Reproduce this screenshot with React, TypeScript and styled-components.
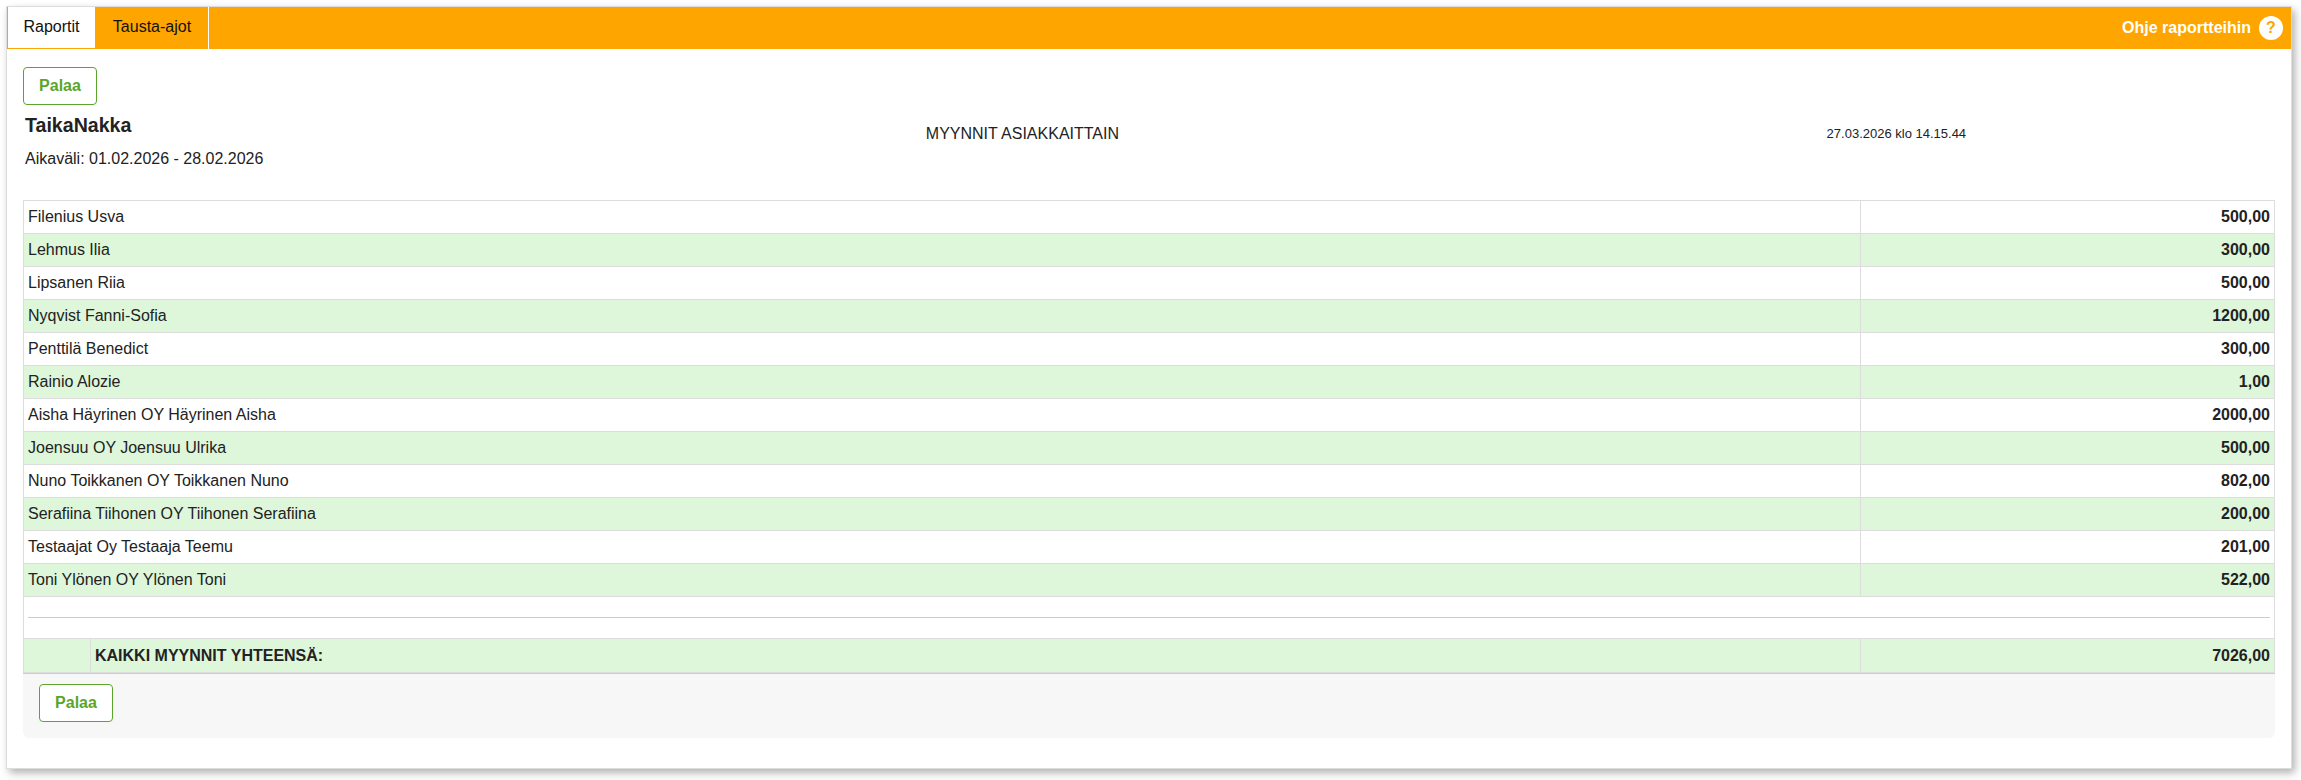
import React from "react";
import styled, { createGlobalStyle } from "styled-components";

const GlobalStyle = createGlobalStyle`
  html, body {
    margin: 0;
    padding: 0;
    background: #fff;
    font-family: "Liberation Sans", Arial, sans-serif;
    font-size: 16px;
    color: #222;
  }
`;

const Page = styled.div`
  padding: 6px 9px 11px 6px;
`;

const Panel = styled.div`
  border: 1px solid #ddd;
  background: #fff;
  box-shadow: 3px 4px 8px rgba(0, 0, 0, 0.3);
  height: 763px;
  box-sizing: border-box;
`;

const TabBar = styled.div`
  display: flex;
  align-items: stretch;
  height: 42px;
  background: #ffa500;
  box-sizing: border-box;
`;

const Tab = styled.div<{ $active?: boolean }>`
  display: flex;
  align-items: center;
  justify-content: center;
  box-sizing: border-box;
  color: #111;
  font-size: 16px;
  ${(p) =>
    p.$active
      ? `width: 89px; background: #fff; border: 1px solid #ffa500; border-top: 0; padding-bottom: 1px;`
      : `width: 113px; border-right: 1px solid #fff; padding-bottom: 2px;`}
`;

const HelpLink = styled.div`
  margin-left: auto;
  display: flex;
  align-items: center;
  gap: 8px;
  padding-right: 8px;
  color: #fff;
  font-weight: bold;
  font-size: 16px;
`;

const HelpIcon = styled.span`
  width: 24px;
  height: 24px;
  border-radius: 50%;
  background: #fff;
  color: #ffa500;
  font-weight: bold;
  font-size: 16px;
  display: flex;
  align-items: center;
  justify-content: center;
`;

const Content = styled.div`
  padding: 18px 16px 0;
`;

const BackButton = styled.button`
  display: block;
  width: 74px;
  height: 38px;
  box-sizing: border-box;
  background: #fff;
  border: 1px solid #5aa62b;
  border-radius: 4px;
  color: #5aa62b;
  font-family: inherit;
  font-size: 16px;
  font-weight: bold;
  padding: 0;
`;

const ReportHead = styled.div`
  display: grid;
  grid-template-columns: 40% 40% 20%;
  align-items: start;
  height: 95px;
`;

const ReportInfo = styled.div`
  padding: 8px 0 0 2px;
`;

const Company = styled.div`
  font-size: 19.6px;
  font-weight: bold;
  line-height: 24px;
  margin-bottom: 13px;
`;

const Period = styled.div`
  font-size: 16px;
  line-height: 18px;
`;

const ReportTitle = styled.div`
  padding: 20px 0 0 2px;
  font-size: 16px;
  line-height: 18px;
  color: #222;
`;

const Stamp = styled.div`
  padding: 20px 0 0 2px;
  font-size: 13px;
  line-height: 18px;
  color: #222;
`;

const Table = styled.table`
  width: 100%;
  border-collapse: collapse;
  table-layout: fixed;
  border: 1px solid #ddd;
`;

const Row = styled.tr<{ $striped?: boolean }>`
  height: 33px;
  background: ${(p) => (p.$striped ? "#def6da" : "#fff")};
`;

const NameCell = styled.td`
  border: 1px solid #ddd;
  padding: 0 4px;
  font-size: 16px;
`;

const AmountCell = styled.td`
  border: 1px solid #ddd;
  padding: 0 4px 0 0;
  text-align: right;
  font-weight: bold;
  font-size: 16px;
`;

const SpacerCell = styled.td`
  height: 41px;
  padding: 0 4px;
  border: 1px solid #ddd;
`;

const Rule = styled.div`
  height: 1px;
  background: #ccc;
`;

const TotalInner = styled.div`
  display: flex;
  height: 33px;
  align-items: stretch;
`;

const TotalIndent = styled.div`
  width: 66px;
  border-right: 1px solid #ddd;
`;

const TotalLabel = styled.div`
  display: flex;
  align-items: center;
  padding-left: 4px;
  font-weight: bold;
`;

const TotalNameCell = styled.td`
  border: 1px solid #ddd;
  padding: 0;
  font-size: 16px;
`;

const Footer = styled.div`
  background: #f7f7f7;
  border-top: 1px solid #ccc;
  border-radius: 0 0 6px 6px;
  height: 65px;
  box-sizing: border-box;
  padding: 10px 16px;
`;

const rows: [string, string][] = [
  ["Filenius Usva", "500,00"],
  ["Lehmus Ilia", "300,00"],
  ["Lipsanen Riia", "500,00"],
  ["Nyqvist Fanni-Sofia", "1200,00"],
  ["Penttilä Benedict", "300,00"],
  ["Rainio Alozie", "1,00"],
  ["Aisha Häyrinen OY Häyrinen Aisha", "2000,00"],
  ["Joensuu OY Joensuu Ulrika", "500,00"],
  ["Nuno Toikkanen OY Toikkanen Nuno", "802,00"],
  ["Serafiina Tiihonen OY Tiihonen Serafiina", "200,00"],
  ["Testaajat Oy Testaaja Teemu", "201,00"],
  ["Toni Ylönen OY Ylönen Toni", "522,00"],
];

export default function App() {
  return (
    <Page>
      <GlobalStyle />
      <Panel>
        <TabBar>
          <Tab $active>Raportit</Tab>
          <Tab>Tausta-ajot</Tab>
          <HelpLink>
            Ohje raportteihin
            <HelpIcon>?</HelpIcon>
          </HelpLink>
        </TabBar>
        <Content>
          <BackButton>Palaa</BackButton>
          <ReportHead>
            <ReportInfo>
              <Company>TaikaNakka</Company>
              <Period>Aikaväli: 01.02.2026 - 28.02.2026</Period>
            </ReportInfo>
            <ReportTitle>MYYNNIT ASIAKKAITTAIN</ReportTitle>
            <Stamp>27.03.2026 klo 14.15.44</Stamp>
          </ReportHead>
          <Table>
            <colgroup>
              <col />
              <col width="414" />
            </colgroup>
            <tbody>
              {rows.map(([name, amount], i) => (
                <Row key={name} $striped={i % 2 === 1}>
                  <NameCell>{name}</NameCell>
                  <AmountCell>{amount}</AmountCell>
                </Row>
              ))}
              <tr>
                <SpacerCell colSpan={2}>
                  <Rule />
                </SpacerCell>
              </tr>
              <Row $striped>
                <TotalNameCell>
                  <TotalInner>
                    <TotalIndent />
                    <TotalLabel>KAIKKI MYYNNIT YHTEENSÄ:</TotalLabel>
                  </TotalInner>
                </TotalNameCell>
                <AmountCell>7026,00</AmountCell>
              </Row>
            </tbody>
          </Table>
          <Footer>
            <BackButton>Palaa</BackButton>
          </Footer>
        </Content>
      </Panel>
    </Page>
  );
}
